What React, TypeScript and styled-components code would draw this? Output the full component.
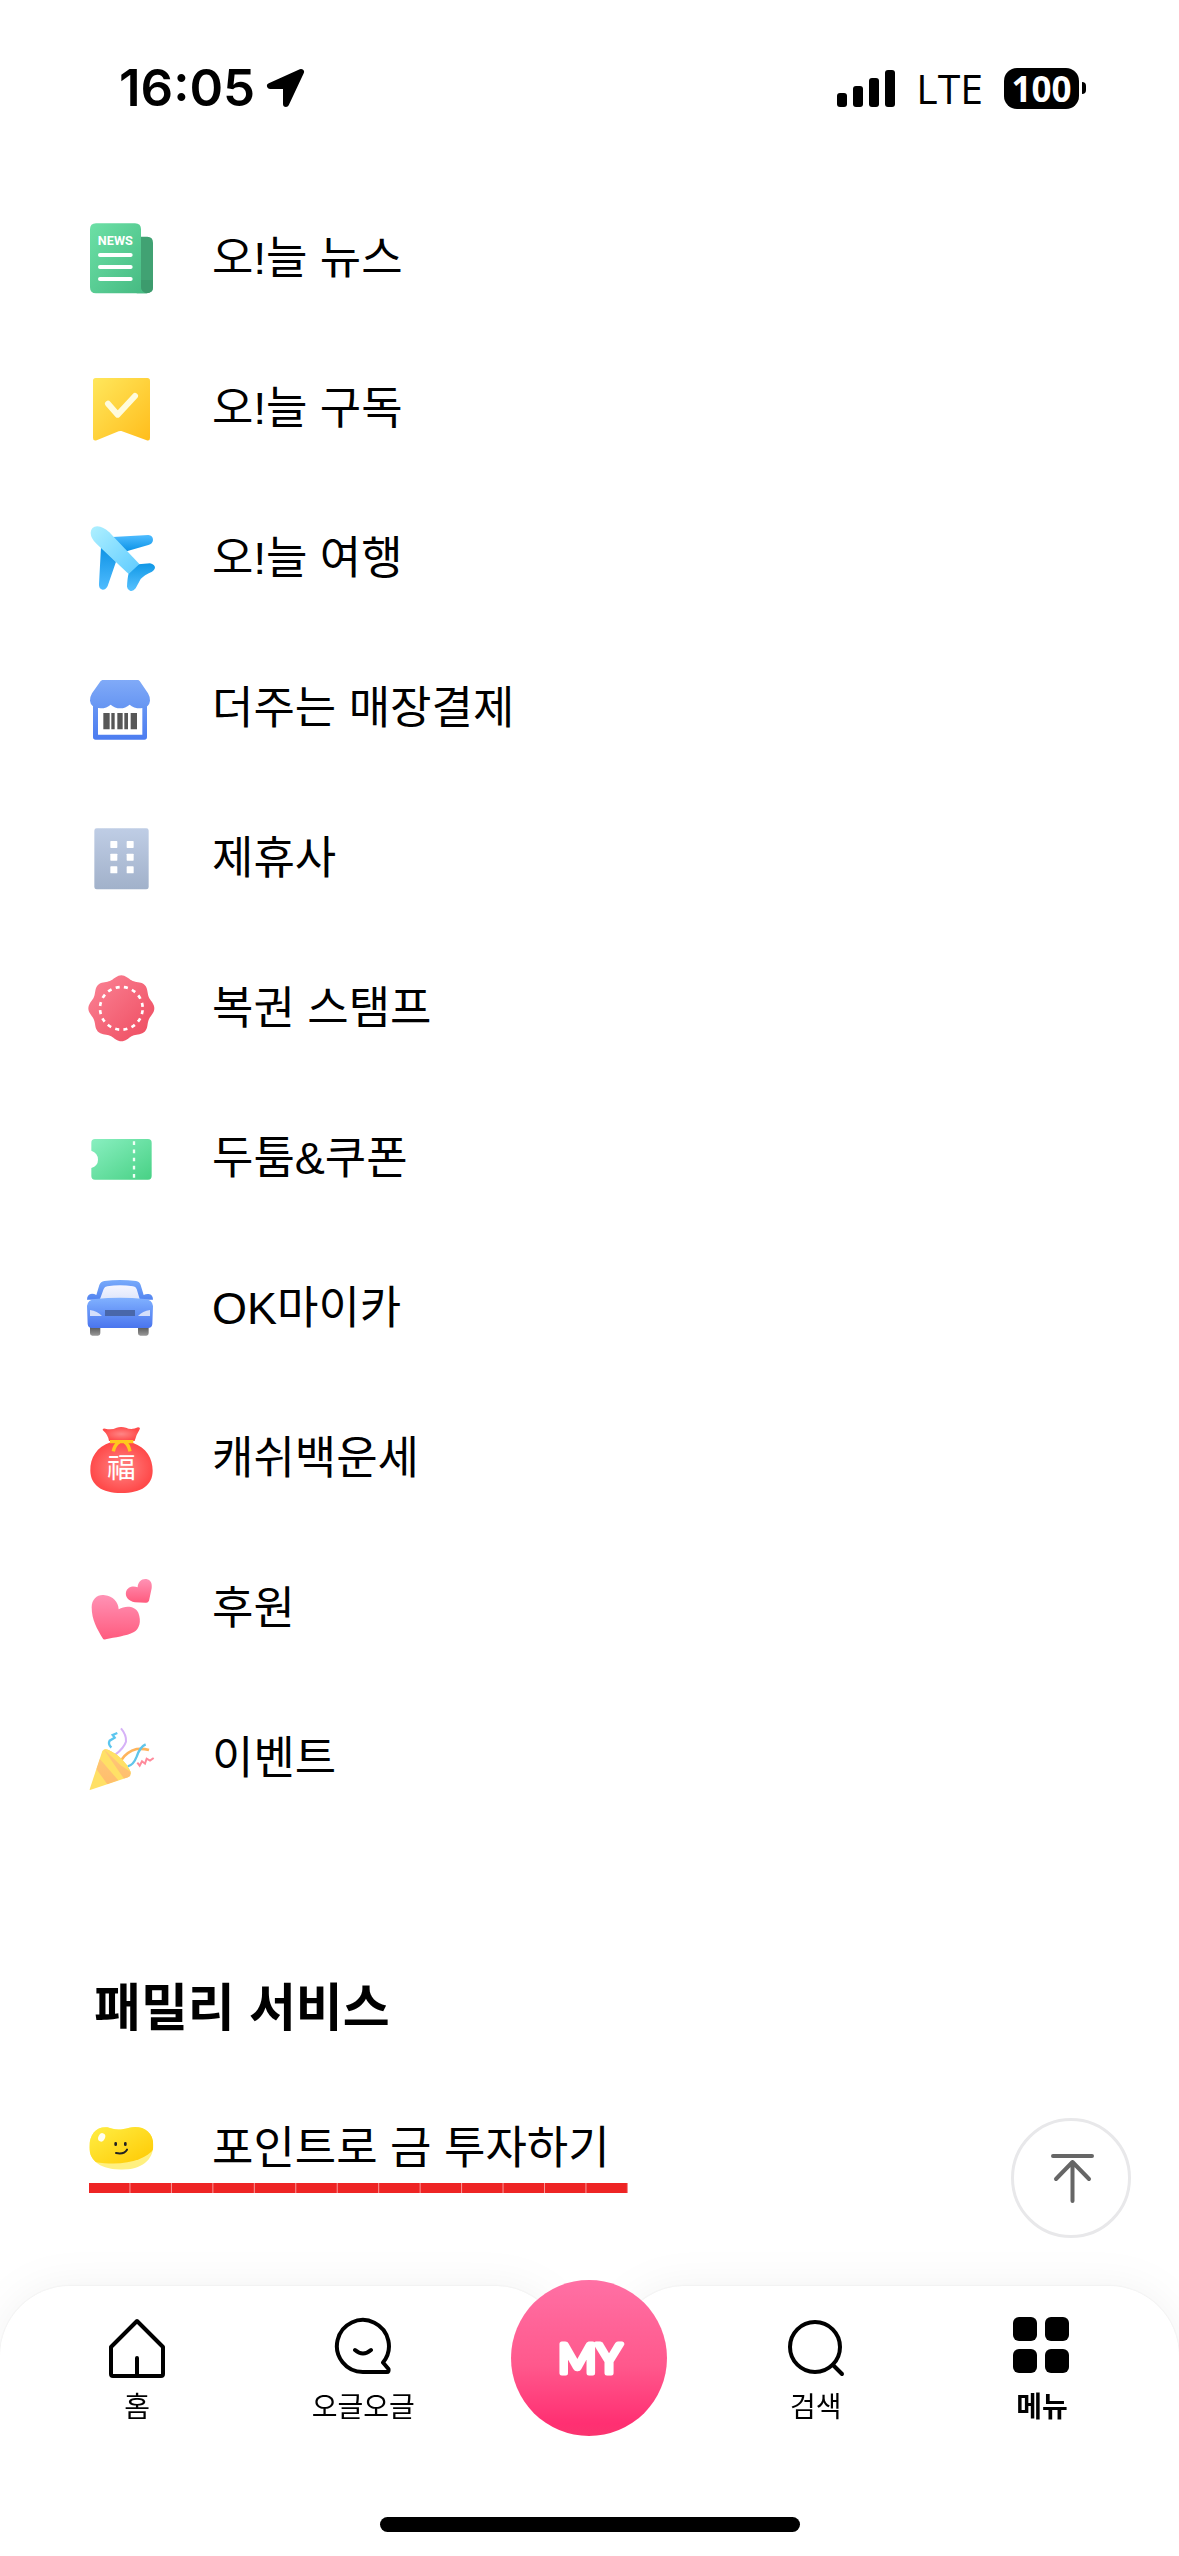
import React from "react";
import styled, { createGlobalStyle, css } from "styled-components";

const GlobalStyle = createGlobalStyle`
  * { box-sizing: border-box; }
  body {
    margin: 0;
    background: #fff;
    color: #000;
    font-family: "Liberation Sans", "Noto Sans CJK KR", sans-serif;
  }
  a { color: inherit; text-decoration: none; }
  button { font: inherit; color: inherit; background: none; border: 0; padding: 0; cursor: pointer; }
`;

const Page = styled.div`
  display: flex;
  flex-direction: column;
  min-height: 100vh;
`;

/* ---------- status bar ---------- */

const StatusBar = styled.header`
  display: flex;
  align-items: center;
  justify-content: space-between;
  height: 56px;
  margin: 60px 93px 67px 119px;
  font-family: Inter, sans-serif;
`;

const StatusGroup = styled.div<{ $gap: number }>`
  display: flex;
  align-items: center;
  gap: ${(p) => p.$gap}px;
`;

const Clock = styled.time`
  font-size: 51px;
  line-height: 56px;
  font-weight: 600;
`;

const SignalBars = styled.div`
  display: flex;
  align-items: flex-end;
  gap: 6px;
  height: 37px;
`;

const SignalBar = styled.span<{ $height: number }>`
  width: 10px;
  height: ${(p) => p.$height}px;
  border-radius: 3px;
  background: #000;
`;

const Network = styled.span`
  font-family: "Open Sans", sans-serif;
  font-size: 41px;
  line-height: 56px;
  font-weight: 500;
`;

const Battery = styled.div`
  display: flex;
  align-items: center;
  gap: 3px;
`;

const BatteryBody = styled.span`
  display: grid;
  place-items: center;
  width: 75px;
  height: 41px;
  border-radius: 13px;
  background: #000;
  color: #fff;
  font-family: "Open Sans", sans-serif;
  font-size: 35px;
  line-height: 41px;
  font-weight: 700;
`;

const BatteryTip = styled.span`
  width: 4px;
  height: 12px;
  border-radius: 0 4px 4px 0;
  background: #000;
`;

/* ---------- service lists ---------- */

const Main = styled.main`
  flex: 1;
`;

const List = styled.ul`
  margin: 0;
  padding: 0;
  list-style: none;
`;

const ServiceLink = styled.a`
  display: flex;
  align-items: center;
  gap: 54px;
  height: 150px;
  padding: 0 86px;
  font-size: 45px;
  line-height: 66px;
`;

const ServiceIcon = styled.svg`
  flex: none;
  width: 72px;
  height: 72px;
`;

const Label = styled.span`
  padding-top: 2px;
`;

const Heading = styled.h2`
  margin: 0;
  padding: 136px 94px 24px;
  font-size: 51px;
  line-height: 80px;
  font-weight: 700;
`;

const Marked = styled.div`
  position: relative;
`;

const Underline = styled.span`
  position: absolute;
  left: 89px;
  top: 110px;
  width: 539px;
  height: 10px;
  background: linear-gradient(90deg, #ee2424 calc(100% - 1px), #f79a9a 0) 0 0 / calc(100% / 13) 100%;
`;

/* ---------- bottom navigation ---------- */

const Dock = styled.nav`
  position: sticky;
  bottom: 0;
  height: 270px;
`;

const Panels = styled.div`
  position: absolute;
  inset: 0;
  display: flex;
  filter: drop-shadow(0 0 1px rgba(0, 0, 0, 0.08)) drop-shadow(0 0 20px rgba(0, 0, 0, 0.05));
`;

const Panel = styled.div<{ $side: "left" | "right" }>`
  flex: 1;
  background: #fff;
  ${(p) =>
    p.$side === "left"
      ? css`border-radius: 70px 93px 0 0 / 70px 140px 0 0;`
      : css`border-radius: 93px 70px 0 0 / 140px 70px 0 0;`}
`;

const Tabs = styled.div`
  position: relative;
  display: grid;
  grid-template-columns: repeat(5, 1fr);
  padding: 0 24px;
`;

const Tab = styled.a<{ $active?: boolean }>`
  display: flex;
  flex-direction: column;
  align-items: center;
  gap: 8px;
  padding-top: 30px;
  font-size: 28px;
  line-height: 40px;
  font-weight: ${(p) => (p.$active ? 700 : 400)};
`;

const TabIcon = styled.svg`
  width: 64px;
  height: 64px;
  fill: none;
  stroke: #000;
  stroke-width: 4;
  stroke-linecap: round;
  stroke-linejoin: round;
`;

const MyButton = styled.button`
  justify-self: center;
  width: 156px;
  height: 156px;
  margin-top: -6px;
  border-radius: 50%;
  background: linear-gradient(180deg, #ff70a4 0%, #ff588c 55%, #ff2f72 92%, #fa356f 100%);
`;

const MyLogo = styled.svg`
  display: block;
  width: 156px;
  height: 156px;
`;

const HomeIndicator = styled.div`
  position: absolute;
  left: 50%;
  bottom: 24px;
  width: 420px;
  height: 15px;
  margin-left: -210px;
  border-radius: 8px;
  background: #000;
`;

const TopButton = styled.button`
  position: fixed;
  right: 48px;
  bottom: 318px;
  display: grid;
  place-items: center;
  width: 120px;
  height: 120px;
  border: 3px solid #e8e8ea;
  border-radius: 50%;
  background: #fff;
`;

/* ---------- service drawings ---------- */

type Stops = [string, string];

const Gradient = ({ id, stops, diagonal }: { id: string; stops: Stops; diagonal?: boolean }) => (
  <linearGradient id={id} x1="0" y1="0" x2={diagonal ? "1" : "0"} y2="1">
    <stop offset="0" stopColor={stops[0]} />
    <stop offset="1" stopColor={stops[1]} />
  </linearGradient>
);

const ODD = "48 66 216 216";
const EVEN = "48 516 216 216";

const NewsIcon = () => (
  <ServiceIcon viewBox={ODD} aria-hidden="true">
    <defs><Gradient id="news" stops={["#6ce0a6", "#45b981"]} diagonal /></defs>
    <path d="M200 110H232Q249 110 249 128V262Q249 279 230 280H200Z" fill="#41a273" />
    <path d="M78 70H195Q213 70 213 88V258Q213 276 230 280H78Q60 280 60 262V88Q60 70 78 70Z" fill="url(#news)" />
    <path d="M213 240V258Q213 276 230 280Q249 278 249 262V240Z" fill="#3c9b6d" />
    <text x="136" y="135" textAnchor="middle" fontFamily="Roboto, sans-serif" fontWeight="700" fontSize="38" fill="#fff">NEWS</text>
    <path d="M90 165H182M90 201H182M90 237H182" stroke="#fff" strokeWidth="12" strokeLinecap="round" />
  </ServiceIcon>
);

const SubscribeIcon = () => (
  <ServiceIcon viewBox={EVEN} aria-hidden="true">
    <defs><Gradient id="sub" stops={["#ffe75c", "#ffbd1c"]} diagonal /></defs>
    <path d="M77 534H232Q240 534 240 542V714Q240 724 230 721L154 693Q150 692 146 694L80 721Q69 724 69 714V542Q69 534 77 534Z" fill="url(#sub)" />
    <path d="M114 611L143 644L195 588" fill="none" stroke="#fffbdc" strokeWidth="18" strokeLinecap="round" strokeLinejoin="round" />
  </ServiceIcon>
);

const TravelIcon = () => (
  <ServiceIcon viewBox={ODD} aria-hidden="true">
    <defs>
      <Gradient id="wing" stops={["#0e92e4", "#4fbcff"]} />
      <Gradient id="wing2" stops={["#4fbcff", "#0b92e6"]} />
      <Gradient id="tail" stops={["#0f97e6", "#58c2ff"]} />
      <Gradient id="body" stops={["#aff0ff", "#5ecbff"]} diagonal />
    </defs>
    <path d="M128 111L235 105Q249 106 249 120Q248 132 235 135L170 154Z" fill="url(#wing2)" />
    <path d="M93 140L138 185L113 258Q108 269 98 269Q86 267 87 253Z" fill="url(#wing)" />
    <path d="M205 193L240 190Q255 193 255 204Q253 211 246 215Q222 225 212 237L197 265Q189 275 180 272Q172 269 171 260Q172 235 176 220Z" fill="url(#tail)" />
    <path d="M62 98Q63 80 82 79Q100 80 118 97L208 192L176 222L80 132Q62 115 62 98Z" fill="url(#body)" />
  </ServiceIcon>
);

const StoreIcon = () => (
  <ServiceIcon viewBox={EVEN} aria-hidden="true">
    <defs>
      <Gradient id="roof" stops={["#80aaf8", "#6695f2"]} />
      <Gradient id="wall" stops={["#6b99f4", "#4c7cf0"]} />
    </defs>
    <path d="M69 600H231V711Q231 719 223 719H77Q69 719 69 711Z" fill="url(#wall)" />
    <path d="M84 610H217V704H84Z" fill="#fff" />
    <path d="M97 540H205L209 543L234 580Q240 590 240 602Q238 624 212 625Q190 625 179 614Q166 625 151 625Q134 625 122 614Q110 625 92 625Q62 624 60 602Q60 590 66 580L92 543Z" fill="url(#roof)" />
    <path d="M100 639H119V688H100ZM124 639H134V688H124ZM142 639H158V688H142ZM163 639H174V688H163ZM182 639H201V688H182Z" fill="#575757" />
  </ServiceIcon>
);

const PartnerIcon = () => (
  <ServiceIcon viewBox={ODD} aria-hidden="true">
    <defs><Gradient id="partner" stops={["#bfcde5", "#a1b1ca"]} /></defs>
    <rect x="73" y="85" width="163" height="183" rx="7" fill="url(#partner)" />
    {[123, 161, 199].map((y) => (
      <React.Fragment key={y}>
        <rect x="121" y={y} width="21" height="21" rx="2" fill="#fff" />
        <rect x="170" y={y} width="21" height="21" rx="2" fill="#fff" />
      </React.Fragment>
    ))}
  </ServiceIcon>
);

const sealPoints = Array.from({ length: 144 }, (_, i) => {
  const a = (i / 144) * Math.PI * 2;
  const r = 94 + 5 * Math.cos(8 * a);
  return `${(154 + r * Math.cos(a)).toFixed(1)},${(625 + r * Math.sin(a)).toFixed(1)}`;
}).join(" ");

const StampIcon = () => (
  <ServiceIcon viewBox={EVEN} aria-hidden="true">
    <defs><Gradient id="stamp" stops={["#fb8496", "#ee4a5e"]} diagonal /></defs>
    <polygon points={sealPoints} fill="url(#stamp)" />
    <circle cx="154" cy="625" r="64" fill="none" stroke="#fff" strokeWidth="8" strokeDasharray="12 13.13" strokeDashoffset="-6" />
  </ServiceIcon>
);

const CouponIcon = () => (
  <ServiceIcon viewBox={ODD} aria-hidden="true">
    <defs><Gradient id="coupon" stops={["#89efc0", "#48d185"]} diagonal /></defs>
    <path d="M75 117H234Q245 117 245 128V228Q245 239 234 239H75Q64 239 64 228V204Q84 197 84 179Q84 159 64 152V128Q64 117 75 117Z" fill="url(#coupon)" />
    <path d="M192 124V233" stroke="#effff5" strokeWidth="7" strokeDasharray="11 13.5" />
  </ServiceIcon>
);

const CarIcon = () => (
  <ServiceIcon viewBox={EVEN} aria-hidden="true">
    <defs>
      <Gradient id="hood" stops={["#80b1ff", "#4a75ee"]} />
      <Gradient id="cabin" stops={["#78abfb", "#5384f0"]} />
      <Gradient id="glass" stops={["#f4f6ff", "#dfe6fb"]} />
      <Gradient id="tyre" stops={["#555", "#999"]} />
    </defs>
    <path d="M60 680H91V700Q91 707 84 707H67Q60 707 60 700ZM204 680H236V700Q236 707 229 707H211Q204 707 204 700Z" fill="url(#tyre)" />
    <path d="M51 599Q51 582 66 581Q73 581 79 585L88 555Q92 545 103 543Q150 537 198 543Q209 545 212 555L221 585Q228 581 236 582Q249 584 249 599Z" fill="url(#cabin)" />
    <path d="M90 597L101 567Q104 560 112 559Q150 553 189 559Q197 560 200 567L209 597Z" fill="url(#glass)" />
    <path d="M51 618Q53 599 76 597Q150 590 224 597Q247 599 249 618L247 672Q246 684 234 684H66Q54 684 53 672Z" fill="url(#hood)" />
    <rect x="105" y="630" width="90" height="18" fill="#4967aa" />
    <path d="M60 630Q82 633 96 648H60ZM240 630Q218 633 204 648H240Z" fill="#d4dffb" />
  </ServiceIcon>
);

const FortuneIcon = () => (
  <ServiceIcon viewBox={ODD} aria-hidden="true">
    <defs>
      <radialGradient id="bag" cx=".5" cy=".5" r=".5">
        <stop offset="0" stopColor="#ff8585" />
        <stop offset="1" stopColor="#ff4a4a" />
      </radialGradient>
    </defs>
    <path d="M98 90Q97 84 106 86Q125 91 140 83Q153 79 168 83Q184 91 204 82Q213 82 208 90Q198 105 194 123H117Q115 105 98 90Z" fill="url(#bag)" />
    <path d="M122 127C80 140 60 175 61 212C62 255 95 279 154 279C215 279 248 255 248 212C248 175 230 143 188 128Z" fill="url(#bag)" />
    <path d="M120 125H190M148 126Q134 134 130 154M164 126Q176 134 180 154" fill="none" stroke="#ffc81e" strokeWidth="10" />
    <text x="154" y="235" textAnchor="middle" fontFamily="'Noto Sans CJK KR', sans-serif" fontWeight="400" fontSize="86" fill="#fff">福</text>
  </ServiceIcon>
);

const HeartsIcon = () => (
  <ServiceIcon viewBox={EVEN} aria-hidden="true">
    <defs><Gradient id="heart" stops={["#ff92b5", "#ff5b7e"]} /></defs>
    <path d="M237 602Q234 609 227 608L195 607C175 603 165 590 168 576C172 560 190 556 203 562C203 545 216 535 229 537C242 539 247 550 245 565Z" fill="url(#heart)" />
    <path d="M107 718Q101 721 97 713C82 688 65 660 65 622C65 595 85 582 105 586C128 589 145 605 146 628C167 615 195 618 205 638C215 665 208 686 192 696C167 709 136 711 107 718Z" fill="url(#heart)" />
  </ServiceIcon>
);

const EventIcon = () => (
  <ServiceIcon viewBox={ODD} aria-hidden="true">
    <defs>
      <clipPath id="cone"><path d="M58 271L97 153Q101 146 114 149Q162 170 182 216Q184 228 174 232Z" /></clipPath>
      <Gradient id="stripe" stops={["#ffc97a", "#ffbd6c"]} />
    </defs>
    <g fill="none" strokeWidth="6">
      <path d="M153 85Q170 105 168 125Q162 144 136 164" stroke="#d6b2f7" />
      <path d="M142 99L128 105L134 113L119 122Q113 132 124 143" stroke="#5cc6ef" strokeWidth="7" />
      <path d="M154 180Q170 155 200 147Q220 145 237 150" stroke="#ffb45c" strokeWidth="8" />
      <path d="M173 199Q190 196 200 170Q210 140 227 133" stroke="#60c5ea" strokeWidth="7" />
      <path d="M202 188L209 197L216 184L225 191L230 176L240 182L251 174" stroke="#ff8a9b" strokeWidth="6" />
    </g>
    <g clipPath="url(#cone)">
      <path d="M50 140H190V280H50Z" fill="#ffe066" />
      <path d="M89 176L145 241L112 253L79 207ZM99 145L118 148L182 210V232L162 236Z" fill="url(#stripe)" />
      <path d="M99 145L130 150L182 205V216L152 196Z" fill="#ffe066" />
    </g>
  </ServiceIcon>
);

const BeanIcon = () => (
  <ServiceIcon viewBox={ODD} aria-hidden="true">
    <defs>
      <Gradient id="bean" stops={["#fff14a", "#ffc800"]} diagonal />
      <clipPath id="beanShape"><path d="M58 172C58 132 80 109 112 112C130 119 152 121 178 113C214 105 250 122 250 165C250 210 215 239 155 239C95 239 58 215 58 172Z" /></clipPath>
    </defs>
    <g clipPath="url(#beanShape)">
      <path d="M58 100H250V240H58Z" fill="#fff080" />
      <path d="M50 100H255V172C235 205 170 232 75 216L50 200Z" fill="url(#bean)" />
    </g>
    <ellipse cx="95" cy="142" rx="10" ry="13" transform="rotate(25 95 142)" fill="#fffef0" />
    <path d="M137 160V164M166 160V164" stroke="#222" strokeWidth="8" strokeLinecap="round" />
    <path d="M138 189Q162 194 171 179" fill="none" stroke="#222" strokeWidth="6" strokeLinecap="round" />
  </ServiceIcon>
);

const services: { name: string; Icon: React.FC }[] = [
  { name: "오!늘 뉴스", Icon: NewsIcon },
  { name: "오!늘 구독", Icon: SubscribeIcon },
  { name: "오!늘 여행", Icon: TravelIcon },
  { name: "더주는 매장결제", Icon: StoreIcon },
  { name: "제휴사", Icon: PartnerIcon },
  { name: "복권 스탬프", Icon: StampIcon },
  { name: "두툼&쿠폰", Icon: CouponIcon },
  { name: "OK마이카", Icon: CarIcon },
  { name: "캐쉬백운세", Icon: FortuneIcon },
  { name: "후원", Icon: HeartsIcon },
  { name: "이벤트", Icon: EventIcon },
];

export default function App() {
  return (
    <Page>
      <GlobalStyle />
      <StatusBar>
        <StatusGroup $gap={11}>
          <Clock>16:05</Clock>
          <svg width="40" height="40" viewBox="0 0 40 40" aria-hidden="true">
            <path d="M35 4L4 18H20V36Z" fill="#000" stroke="#000" strokeWidth="6" strokeLinejoin="round" />
          </svg>
        </StatusGroup>
        <StatusGroup $gap={21}>
          <SignalBars>
            {[14, 21, 29, 37].map((h) => <SignalBar key={h} $height={h} />)}
          </SignalBars>
          <Network>LTE</Network>
          <Battery>
            <BatteryBody>100</BatteryBody>
            <BatteryTip />
          </Battery>
        </StatusGroup>
      </StatusBar>

      <Main>
        <List>
          {services.map(({ name, Icon }) => (
            <li key={name}>
              <ServiceLink href="#"><Icon /><Label>{name}</Label></ServiceLink>
            </li>
          ))}
        </List>
        <Heading>패밀리 서비스</Heading>
        <Marked>
          <ServiceLink href="#"><BeanIcon /><Label>포인트로 금 투자하기</Label></ServiceLink>
          <Underline />
        </Marked>
      </Main>

      <TopButton aria-label="맨 위로">
        <svg width="60" height="60" viewBox="0 0 60 60" fill="none" stroke="#666" strokeWidth="4" strokeLinecap="round" strokeLinejoin="round" aria-hidden="true">
          <path d="M12 8H51M31.500 14V53M15 31L31.500 14L48 31" />
        </svg>
      </TopButton>

      <Dock>
        <Panels>
          <Panel $side="left" />
          <Panel $side="right" />
        </Panels>
        <Tabs>
          <Tab href="#">
            <TabIcon viewBox="0 0 64 64">
              <path d="M32 5L58 31V58Q58 60 56 60H8Q6 60 6 58V31ZM32 42V60" />
            </TabIcon>
            홈
          </Tab>
          <Tab href="#">
            <TabIcon viewBox="0 0 64 64">
              <path d="M32 56A26 26 0 1 1 52 46.500L57.500 53Q58 56 56 56ZM24 34Q32 41 40 34" />
            </TabIcon>
            오글오글
          </Tab>
          <MyButton aria-label="MY">
            <MyLogo viewBox="0 0 156 156" aria-hidden="true">
              <text x="79" y="93" textAnchor="middle" fontFamily="Lato, sans-serif" fontWeight="400" fontSize="41" fill="#fff" stroke="#fff" strokeWidth="5" strokeLinejoin="round">MY</text>
            </MyLogo>
          </MyButton>
          <Tab href="#">
            <TabIcon viewBox="0 0 64 64">
              <circle cx="31" cy="31" r="25" />
              <path d="M49 49L58 58" />
            </TabIcon>
            검색
          </Tab>
          <Tab href="#" $active>
            <TabIcon viewBox="0 0 64 64">
              <g fill="#000" stroke="none">
                <rect x="3" y="1" width="24" height="24" rx="6" />
                <rect x="35" y="1" width="24" height="24" rx="6" />
                <rect x="3" y="33" width="24" height="24" rx="6" />
                <rect x="35" y="33" width="24" height="24" rx="6" />
              </g>
            </TabIcon>
            메뉴
          </Tab>
        </Tabs>
        <HomeIndicator />
      </Dock>
    </Page>
  );
}
